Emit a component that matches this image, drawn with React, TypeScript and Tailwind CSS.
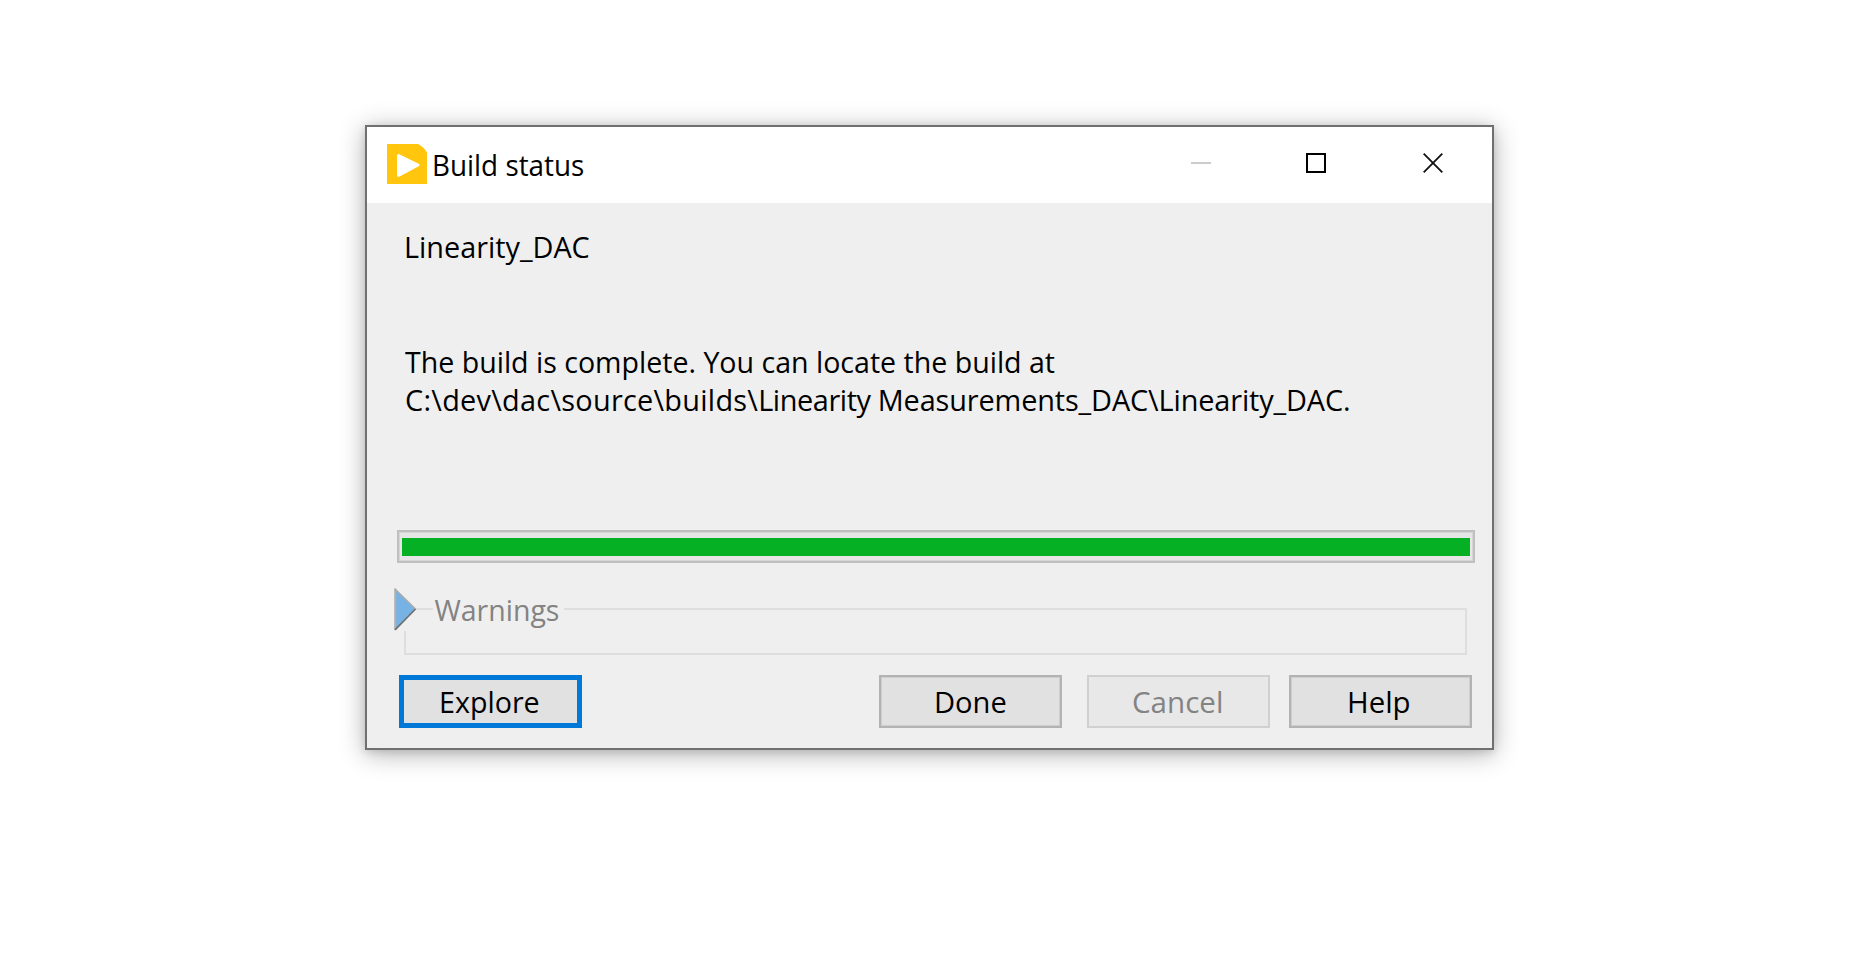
import type { ReactNode } from "react";

function DialogButton({ className, label }: { className: string; label: ReactNode }) {
  return (
    <button
      type="button"
      className={`flex h-[53px] w-[183px] shrink-0 items-start justify-start text-[30px] leading-[40px] ${className}`}
    >
      {label}
    </button>
  );
}

function TitleBar() {
  return (
    <header className="flex h-[76px] items-start bg-white pl-5 pt-[17px]">
      <svg width="40" height="40" viewBox="0 0 40 40" className="shrink-0" aria-hidden="true">
        <path d="M0 0H31C34 1.5 38.5 5 40 9V40H0Z" fill="#ffc60d" />
        <path
          d="M11.5 11.5L31 21L11.5 31.3Z"
          fill="#fff"
          stroke="#fff"
          strokeWidth="3"
          strokeLinejoin="round"
        />
      </svg>
      <h1 className="ml-[4.5px] w-[760px] origin-left scale-x-[0.96] whitespace-nowrap pt-px text-[29px] leading-[40px]">
        Build status
      </h1>
      <div className="-ml-[0.5px] flex pt-[9px]">
        <svg width="20" height="20" viewBox="0 0 20 20" aria-label="Minimize">
          <path d="M0 9H20V11H0Z" fill="#ccc" />
        </svg>
        <svg width="20" height="20" viewBox="0 0 20 20" className="ml-[95px]" aria-label="Maximize">
          <path d="M1 1H19V19H1Z" fill="none" stroke="#000" strokeWidth="2" />
        </svg>
        <svg width="20" height="20" viewBox="0 0 20 20" className="ml-[97px]" aria-label="Close">
          <path d="M0.7 0.7L19.3 19.3M19.3 0.7L0.7 19.3" stroke="#111" strokeWidth="1.8" />
        </svg>
      </div>
    </header>
  );
}

function ProgressBar() {
  return (
    <div className="ml-[30px] mt-[112px] h-[33px] w-[1078px] border-2 border-[#bfbfbf] bg-[#e6e6e6] px-[3px] pb-1.5 pt-[5.5px] shadow-[inset_0_0_0_1px_#d6d6d6]">
      <div className="h-[18px] bg-[#06b025]" />
    </div>
  );
}

function WarningsGroup() {
  return (
    <section className="mt-[25px] grid h-[67px] pl-[27px] pr-[25px]">
      <div className="col-start-1 row-start-1 ml-[10px] mt-5 border-2 border-[#dedede]" />
      <div className="col-start-1 row-start-1 flex items-start">
        <div className="w-[22px] bg-[#efefef]">
          <svg width="23" height="43" viewBox="0 0 23 43" aria-hidden="true">
            <path d="M1.5 1L21.5 21.5L1.5 42Z" fill="#76b3e4" />
            <path d="M1.2 0.5V42" stroke="#b0b0b0" strokeWidth="2" />
            <path d="M1 1L21.5 21" stroke="#aaa" strokeWidth="1.5" />
            <path d="M21.5 21L1 41.8" stroke="#707070" strokeWidth="1.7" />
          </svg>
        </div>
        <div className="ml-[17px] h-[42px] w-[131px] bg-[#efefef] pt-px">
          <span className="block origin-left scale-x-[0.95] whitespace-nowrap pl-[1.5px] text-[30px] leading-[41px] text-[#838383]">
            Warnings
          </span>
        </div>
      </div>
    </section>
  );
}

export default function App() {
  return (
    <main className="flex h-[956px] w-[1860px] items-start bg-white pl-[365px] pt-[125px] font-['Open_Sans','Noto_Sans',sans-serif] text-black">
      <div className="flex h-[625px] w-[1129px] flex-col border-2 border-[#707070] bg-[#efefef] shadow-[0_4px_24px_rgba(0,0,0,0.3),0_2px_8px_rgba(0,0,0,0.12)]">
        <TitleBar />
        <p className="ml-[36.5px] mt-[25px] w-fit origin-left scale-x-[0.96] whitespace-nowrap text-[30px] leading-[38px]">
          Linearity_DAC
        </p>
        <div className="ml-[37.5px] mt-[77px] text-[30px] leading-[37.5px]">
          <p className="w-fit origin-left scale-x-[0.952] whitespace-nowrap">
            The build is complete. You can locate the build at
          </p>
          <p className="w-fit origin-left scale-x-[0.962] whitespace-nowrap">
            <span className="tracking-[0.28px]">{"C:\\dev\\dac\\source\\builds\\"}</span>
            <span className="tracking-[-0.42px]">{"Linearity "}</span>
            <span className="tracking-[-0.13px]">{"Measurements_DAC\\Linearity_DAC."}</span>
          </p>
        </div>
        <ProgressBar />
        <WarningsGroup />
        <div className="mt-5 flex pl-[32px]">
          <DialogButton
            className="border-[5px] border-[#0078d7] bg-[#e1e1e1] pl-[35px] pt-[2px]"
            label={<span className="origin-left scale-x-[0.955]">Explore</span>}
          />
          <DialogButton
            className="ml-[297px] border-2 border-[#b3b3b3] bg-[#e1e1e1] pl-[53px] pt-[5px] shadow-[inset_0_0_0_1px_#cecece]"
            label={<span className="origin-left scale-x-[0.97]">Done</span>}
          />
          <DialogButton
            className="ml-[25px] border-2 border-[#d0d0d0] bg-[#e8e8e8] pl-[43px] pt-[5px] text-[#838383]"
            label={<span className="origin-left scale-x-[0.985]">Cancel</span>}
          />
          <DialogButton
            className="ml-[19px] border-2 border-[#b3b3b3] bg-[#e1e1e1] pl-[55.5px] pt-[5px] shadow-[inset_0_0_0_1px_#cecece]"
            label={<span className="origin-left scale-x-[0.98]">Help</span>}
          />
        </div>
      </div>
    </main>
  );
}
